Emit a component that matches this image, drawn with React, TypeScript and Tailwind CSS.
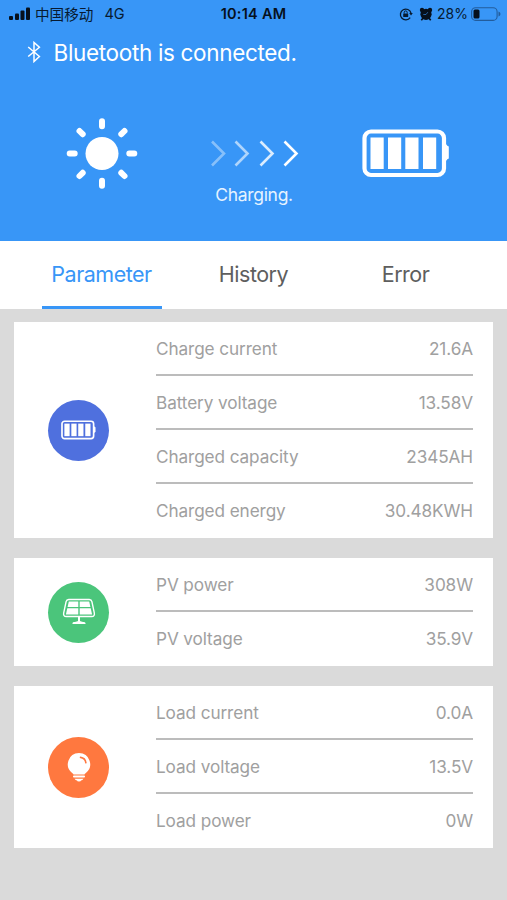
import type { ReactNode } from "react";

function BatteryIcon({ className }: { className?: string }) {
  return (
    <svg viewBox="0 0 88 49" className={className} fill="white">
      <rect x="2.500" y="2.500" width="79.500" height="43.500" rx="6.500" fill="none" stroke="white" strokeWidth="4.200" />
      <path d="M83 15.500h1.500q.5 1.500 2.300 2v12q-1.800.5-2.300 2H83z" />
      <rect x="8.500" y="8.500" width="13.200" height="31.500" />
      <rect x="26" y="8.500" width="13.200" height="31.500" />
      <rect x="43.300" y="8.500" width="13.200" height="31.500" />
      <rect x="61" y="8.500" width="13.200" height="31.500" />
    </svg>
  );
}

function SolarIcon() {
  return (
    <svg viewBox="0 0 34 28" className="h-7 w-[34px]" fill="white">
      <path
        d="M6.7 1.5h20.6c1.5 0 2.300.8 2.600 2.100l2.400 11.200c.5 2.400-.5 3.700-2.600 3.700H4.300c-2.100 0-3.100-1.300-2.600-3.700L4.100 3.600c.3-1.300 1.100-2.100 2.600-2.100z"
        fill="none"
        stroke="white"
        strokeWidth="1.400"
      />
      <path d="M6.800 3.400h9.500v5.700H5.600zM17.700 3.400h9.500l1.200 5.700H17.700zM5.300 10.200h11v6.400H3.900zM17.700 10.200h11l1.400 6.400H17.700z" />
      <path d="M16 18.500h2v4.400c1 1 5.500.7 5.500 2.200v.9h-13v-.9c0-1.500 4.500-1.200 5.500-2.200z" />
    </svg>
  );
}

function BulbIcon() {
  return (
    <svg viewBox="0 0 24 31" className="h-[31px] w-6" fill="white">
      <path d="M12 1a11.200 11.200 0 0 0-6.600 20.200q.8.600 1.100 1.300h11q.3-.7 1.100-1.300A11.200 11.200 0 0 0 12 1z" />
      <path d="M13.500 5.400c3 .4 5 2.600 5.400 5.400" fill="none" stroke="#ff7840" strokeWidth="1.600" strokeLinecap="round" />
      <rect x="6" y="23.600" width="12" height="1.900" rx=".9" />
      <path d="M7.500 26.700h9q-1 1.500-2.500 1.700 0 1.100-2 1.100t-2-1.100q-1.500-.2-2.500-1.700z" />
    </svg>
  );
}

function StatusBar() {
  return (
    <div className="grid h-7 grid-cols-3 items-center px-[9px] text-[13px] text-[#071a30]">
      <div className="flex items-center">
        <svg viewBox="0 0 22 14" className="mr-[4px] h-[14px] w-[22px]" fill="#06101c">
          <rect x="0" y="9" width="4" height="4" rx="1" />
          <rect x="6" y="6.500" width="4" height="6.500" rx="1" />
          <rect x="11.500" y="3.500" width="4" height="9.500" rx="1" />
          <rect x="17" y="0.500" width="4" height="12.500" rx="1" />
        </svg>
        <span className="whitespace-nowrap font-['Noto_Sans_CJK_SC',sans-serif] text-[14.600px] leading-none">中国移动</span>
        <span className="ml-[11px] text-[14.500px] leading-none">4G</span>
      </div>
      <div className="text-center text-[14.500px] leading-none font-semibold tracking-[0.25px] whitespace-nowrap text-[#06101c]">10:14 AM</div>
      <div className="-mr-[3px] flex items-center justify-end">
        <svg viewBox="0 0 14 14" className="mr-[6px] h-[14px] w-[14px]" fill="none" stroke="#071a30" strokeWidth="1.300">
          <path d="M11.200 10.600A5.400 5.400 0 1 1 12 6" />
          <path d="M10.200 6h3.600L12 8.600z" fill="#071a30" stroke="none" />
          <rect x="4.200" y="6.400" width="5" height="3.600" rx=".5" fill="#071a30" stroke="none" />
          <path d="M5.200 6.500V5.400a1.500 1.500 0 0 1 3 0v1.100" strokeWidth="1" />
        </svg>
        <svg viewBox="0 0 14 14" className="mr-[4px] h-[14px] w-[14px]" fill="#06101c">
          <circle cx="7" cy="7.300" r="5.600" />
          <circle cx="3" cy="3" r="2.200" />
          <circle cx="11" cy="3" r="2.200" />
          <path d="M2.300 13.200l2-2.500M11.700 13.200l-2-2.500" stroke="#06101c" strokeWidth="1.700" />
          <path d="M8.800 5.200L7 7.500H4.300" fill="none" stroke="#3896f7" strokeWidth=".6" />
        </svg>
        <span className="text-[14px] leading-none">28%</span>
        <svg viewBox="0 0 30 15" className="ml-[3px] h-[15px] w-[30px]">
          <rect x=".6" y=".8" width="25.500" height="12.600" rx="4" fill="none" stroke="#225c9c" strokeWidth="1.100" />
          <rect x="2.500" y="2.600" width="6" height="9" rx="1.500" fill="#06101c" />
          <path d="M27.500 4.600v5q2-.7 2-2.500t-2-2.500z" fill="#225c9c" />
        </svg>
      </div>
    </div>
  );
}

function Header() {
  return (
    <header className="h-[241px] bg-[#3896f7] text-white">
      <StatusBar />
      <div className="flex h-[49px] items-center pl-[27px]">
        <svg viewBox="0 0 14 22" className="mb-[2px] h-[22px] w-[14px]" fill="none" stroke="white" strokeWidth="1.500">
          <path d="M1.200 6l11.200 9.500L7 20.500V1.500l5.400 4.800L1.200 15.500" />
        </svg>
        <h1 className="ml-[12.500px] text-[22.500px] tracking-[-0.330px] whitespace-nowrap">Bluetooth is connected.</h1>
      </div>
      <div className="flex pt-[40px]">
        <svg viewBox="0 0 72 72" className="ml-[66px] h-[72px] w-[72px]" stroke="white" strokeWidth="6" strokeLinecap="round">
          <circle cx="36" cy="36.500" r="16.500" fill="white" stroke="none" />
          <path d="M36 4.200v5M36 63.800v5M3.700 36.500h5M63.300 36.500h5M13.500 14l3.200 3.200M58.500 14l-3.200 3.200M13.500 59l3.200-3.200M58.500 59l-3.200-3.200" />
        </svg>
        <div className="ml-[72px] flex w-[89px] flex-col items-center pt-[23px]">
          <svg viewBox="0 0 89 27" className="h-[27px] w-[89px] shrink-0" fill="none" stroke="white" strokeWidth="2.600">
            <path d="M2 1.500l12 12-12 12" opacity=".4" />
            <path d="M25.500 1.500l12 12-12 12" opacity=".6" />
            <path d="M50.500 1.500l12 12-12 12" opacity=".82" />
            <path d="M74.500 1.500l12 12-12 12" />
          </svg>
          <p className="mt-[16px] mr-px text-[17.500px] leading-[24px] tracking-[-0.300px] text-[#e6f3ff]">Charging.</p>
        </div>
        <BatteryIcon className="mt-[12px] ml-[63px] h-[49px] w-[88px]" />
      </div>
    </header>
  );
}

function Tabs() {
  return (
    <nav className="flex h-[68px] justify-center bg-white text-[21.500px] tracking-[-0.500px] text-[#5e5e5e]">
      <div className="flex w-[152px] justify-center">
        <button className="w-[120px] border-b-[3px] border-[#3896f7] pt-px text-[#3896f7]">Parameter</button>
      </div>
      <button className="w-[152px] border-b-[3px] border-transparent pt-px">History</button>
      <button className="w-[152px] border-b-[3px] border-transparent pt-px">Error</button>
    </nav>
  );
}

function Card({ icon, color, rows }: { icon: ReactNode; color: string; rows: string[][] }) {
  return (
    <section className="flex items-center bg-white pr-5">
      <div className={`mr-[47px] ml-[34px] flex h-[61px] w-[61px] shrink-0 items-center justify-center rounded-full ${color}`}>
        {icon}
      </div>
      <dl className="grow divide-y-2 divide-[#bcbcbc]">
        {rows.map(([label, value]) => (
          <div key={label} className="flex h-[54px] items-start justify-between pt-[14px] text-[17.200px] leading-[26px] tracking-[-0.100px] text-[#a0a0a0]">
            <dt>{label}</dt>
            <dd>{value}</dd>
          </div>
        ))}
      </dl>
    </section>
  );
}

export default function App() {
  return (
    <div className="h-[900px] w-[507px] overflow-hidden bg-[#dadada] font-['Inter','Noto_Sans_CJK_SC',sans-serif]">
      <Header />
      <Tabs />
      <main className="flex flex-col gap-5 px-[14px] pt-[13px]">
        <Card
          color="bg-[#4f70de]"
          icon={<BatteryIcon className="h-[20px] w-[35px]" />}
          rows={[
            ["Charge current", "21.6A"],
            ["Battery voltage", "13.58V"],
            ["Charged capacity", "2345AH"],
            ["Charged energy", "30.48KWH"],
          ]}
        />
        <Card
          color="bg-[#4bc57b]"
          icon={<SolarIcon />}
          rows={[
            ["PV power", "308W"],
            ["PV voltage", "35.9V"],
          ]}
        />
        <Card
          color="bg-[#ff783f]"
          icon={<BulbIcon />}
          rows={[
            ["Load current", "0.0A"],
            ["Load voltage", "13.5V"],
            ["Load power", "0W"],
          ]}
        />
      </main>
    </div>
  );
}
